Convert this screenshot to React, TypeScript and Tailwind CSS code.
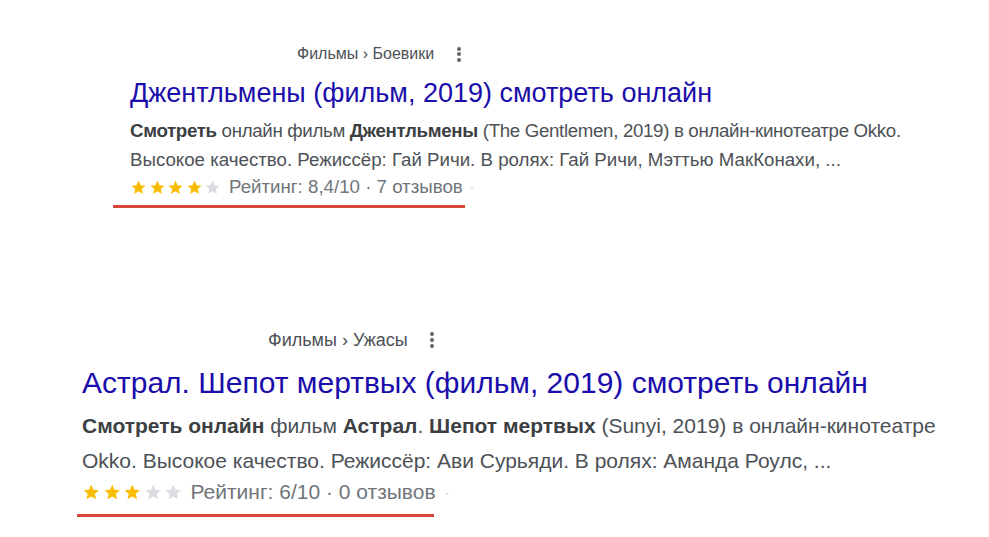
import React from "react";

function Star({ on, size }: { on: boolean; size: number }) {
  return (
    <svg width={size} height={size} viewBox="0 0 24 24" className="shrink-0">
      <path
        d="M12 2.2l2.9 6.6 7.1.6-5.4 4.7 1.6 7-6.2-3.7-6.2 3.7 1.6-7L2 9.4l7.1-.6z"
        fill={on ? "#fbbc04" : "#dadce0"}
      />
    </svg>
  );
}

function Dots({ cls }: { cls: string }) {
  return (
    <span className={`flex flex-col items-center justify-between ${cls}`}>
      <span className="block w-[4px] h-[4px] rounded-full bg-[#5f6368]" />
      <span className="block w-[4px] h-[4px] rounded-full bg-[#5f6368]" />
      <span className="block w-[4px] h-[4px] rounded-full bg-[#5f6368]" />
    </span>
  );
}

export default function App() {
  const font = { fontFamily: '"Liberation Sans", Arial, sans-serif' };
  return (
    <div className="w-[989px] h-[537px] bg-white overflow-hidden relative" style={font}>
      {/* Block 1 */}
      <div className="pt-[44px] pl-[130px]">
        <div className="flex items-center h-[20px] ml-[167px] text-[16px] text-[#4d5156]">
          <span>Фильмы › Боевики</span>
          <Dots cls="ml-[23px] h-[15px]" />
        </div>
        <div className="mt-[14px] text-[27px] leading-[30px] text-[#1a0dab] whitespace-nowrap">
          Джентльмены (фильм, 2019) смотреть онлайн
        </div>
        <div className="mt-[8px] text-[18.7px] leading-[29px] text-[#4d5156] whitespace-nowrap">
          <span className="tracking-[-0.33px]">
            <b className="text-[#3c4043]">Смотреть</b> онлайн фильм <b className="text-[#3c4043]">Джентльмены</b> (The Gentlemen, 2019) в онлайн-кинотеатре Okko.
          </span>
          <br />
          Высокое качество. Режиссёр: Гай Ричи. В ролях: Гай Ричи, Мэттью МакКонахи, ...
        </div>
        <div className="flex items-center h-[26px] text-[18.7px] text-[#70757a] whitespace-nowrap">
          <div className="flex gap-[1.5px]">
            <Star on size={17} />
            <Star on size={17} />
            <Star on size={17} />
            <Star on size={17} />
            <Star on={false} size={17} />
          </div>
          <span className="ml-[8px]">Рейтинг: 8,4/10 · 7 отзывов</span>
          <span className="ml-[6px] text-[#dadce0]">·</span>
        </div>
        <div className="ml-[-17px] mt-[5px] w-[352px] h-[3px] bg-[#d9463b]" />
      </div>

      {/* Block 2 */}
      <div className="pt-[121px] pl-[82px]">
        <div className="flex items-center h-[22px] ml-[186px] text-[18px] text-[#4d5156]">
          <span>Фильмы › Ужасы</span>
          <Dots cls="ml-[22px] h-[16px]" />
        </div>
        <div className="mt-[15px] text-[30px] leading-[34px] text-[#1a0dab] whitespace-nowrap">
          Астрал. Шепот мертвых (фильм, 2019) смотреть онлайн
        </div>
        <div className="mt-[8px] text-[21px] leading-[35px] text-[#4d5156] whitespace-nowrap">
          <b className="text-[#3c4043]">Смотреть онлайн</b> фильм <b className="text-[#3c4043]">Астрал</b>. <b className="text-[#3c4043]">Шепот мертвых</b> (Sunyi, 2019) в онлайн-кинотеатре
          <br />
          Okko. Высокое качество. Режиссёр: Ави Сурьяди. В ролях: Аманда Роулс, ...
        </div>
        <div className="flex items-center h-[28px] text-[21px] text-[#70757a] whitespace-nowrap">
          <div className="flex gap-[2px]">
            <Star on size={18.5} />
            <Star on size={18.5} />
            <Star on size={18.5} />
            <Star on={false} size={18.5} />
            <Star on={false} size={18.5} />
          </div>
          <span className="ml-[8px]">Рейтинг: 6/10 · 0 отзывов</span>
          <span className="ml-[8px] text-[#dadce0]">·</span>
        </div>
        <div className="ml-[-5px] mt-[8px] w-[357px] h-[3px] bg-[#d9463b]" />
      </div>
    </div>
  );
}
